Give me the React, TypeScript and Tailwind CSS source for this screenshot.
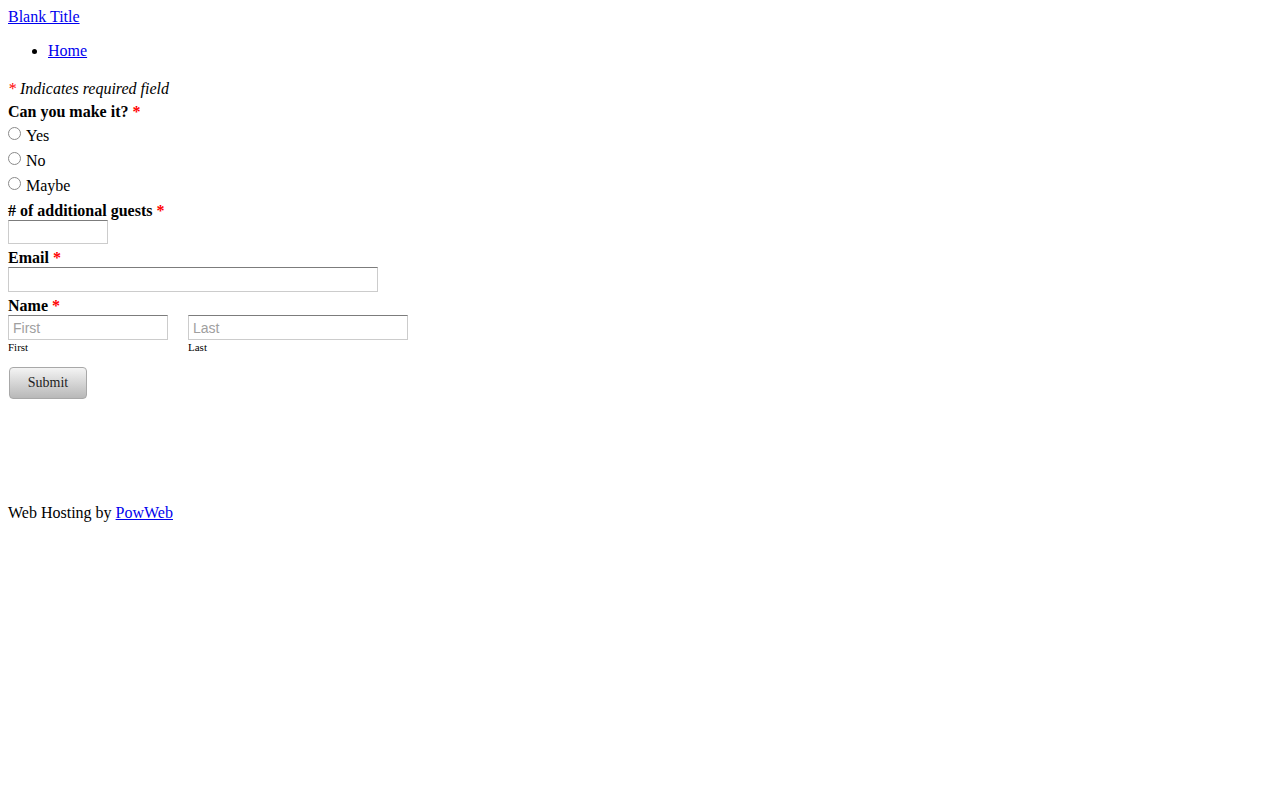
import React from 'react';

const serif = "font-['Liberation_Serif','Times_New_Roman',serif]";
const link = 'text-[#0000ee] underline';

function Req() {
  return <span className="text-[#ff0000]"> *</span>;
}

function Radio({ label }: { label: string }) {
  return (
    <label className="flex h-[25px] items-center">
      <input
        type="radio"
        name="attend"
        className="m-0 h-[13px] w-[13px] shrink-0 -translate-y-[1px] appearance-none rounded-full border border-[#8a8a8a] bg-white"
      />
      <span className="ml-[5px] leading-[18px] translate-y-[1px]">{label}</span>
    </label>
  );
}

export default function App() {
  return (
    <div className={`${serif} min-h-[800px] bg-white px-[8px] pt-[8px] text-[16px] leading-[18px] text-black`}>
      <a href="#" className={link}>Blank Title</a>

      <ul className="mt-[16px] list-disc pl-[40px]">
        <li>
          <a href="#" className={link}>Home</a>
        </li>
      </ul>

      <form className="mt-[20px]" onSubmit={(e) => e.preventDefault()}>
        <p className="italic">
          <span className="text-[#ff0000]">*</span> Indicates required field
        </p>

        <div className="mt-[5px] font-bold">
          Can you make it?<Req />
        </div>
        <div className="mt-[1px]">
          <Radio label="Yes" />
          <Radio label="No" />
          <Radio label="Maybe" />
        </div>

        <div className="mt-[5px] font-bold">
          # of additional guests<Req />
        </div>
        <input
          type="text"
          className="block h-[24px] w-[100px] border border-[#cccccc] border-t-[#7c7c7c] outline-none"
        />

        <div className="mt-[5px] font-bold">
          Email<Req />
        </div>
        <input
          type="text"
          className="block h-[25px] w-[370px] border border-[#cccccc] border-t-[#7c7c7c] outline-none"
        />

        <div className="mt-[5px] font-bold">
          Name<Req />
        </div>
        <div className="flex gap-[20px]">
          <div>
            <input
              type="text"
              placeholder="First"
              className="block h-[25px] w-[160px] border border-[#cccccc] border-t-[#7c7c7c] px-[4px] font-['Liberation_Sans',Arial,sans-serif] text-[14px] outline-none placeholder:text-[#a0a0a0]"
            />
            <div className="mt-[1px] text-[11px] leading-[12px]">First</div>
          </div>
          <div>
            <input
              type="text"
              placeholder="Last"
              className="block h-[25px] w-[220px] border border-[#cccccc] border-t-[#7c7c7c] px-[4px] font-['Liberation_Sans',Arial,sans-serif] text-[14px] outline-none placeholder:text-[#a0a0a0]"
            />
            <div className="mt-[1px] text-[11px] leading-[12px]">Last</div>
          </div>
        </div>

        <button
          type="submit"
          className="ml-[1px] mt-[14px] block h-[32px] w-[78px] rounded-[4px] border border-[#a8a8a8] bg-gradient-to-b from-[#f4f4f4] to-[#b8b8b8] text-[14px] text-[#222]"
        >
          Submit
        </button>
      </form>

      <p className="mt-[105px]">
        Web Hosting by <a href="#" className={link}>PowWeb</a>
      </p>
    </div>
  );
}
